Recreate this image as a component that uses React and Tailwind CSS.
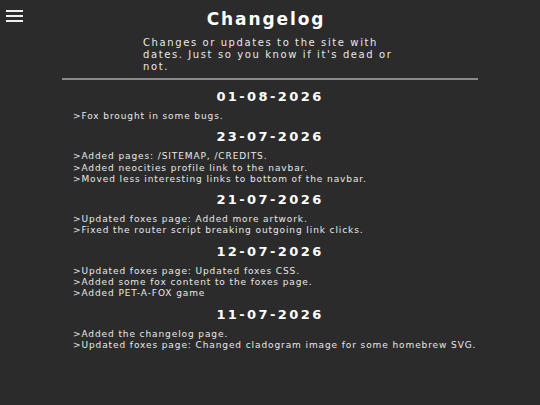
import React from "react";

const entries = [
  { date: "01-08-2026", items: [">Fox brought in some bugs."] },
  {
    date: "23-07-2026",
    items: [
      ">Added pages: /SITEMAP, /CREDITS.",
      ">Added neocities profile link to the navbar.",
      ">Moved less interesting links to bottom of the navbar.",
    ],
  },
  {
    date: "21-07-2026",
    items: [
      ">Updated foxes page: Added more artwork.",
      ">Fixed the router script breaking outgoing link clicks.",
    ],
  },
  {
    date: "12-07-2026",
    items: [
      ">Updated foxes page: Updated foxes CSS.",
      ">Added some fox content to the foxes page.",
      ">Added PET-A-FOX game",
    ],
  },
  {
    date: "11-07-2026",
    items: [
      ">Added the changelog page.",
      ">Updated foxes page: Changed cladogram image for some homebrew SVG.",
    ],
  },
];

const App = () => {
  return (
    <div className="min-h-[405px] w-full bg-[#2b2b2b] text-[#e8e8e8] font-['DejaVu_Sans',sans-serif] relative">
      {/* Menu button */}
      <button className="absolute left-[6px] top-[10px] flex flex-col gap-[3px]">
        <span className="block w-[17px] h-[2px] bg-[#f0f0f0]" />
        <span className="block w-[17px] h-[2px] bg-[#f0f0f0]" />
        <span className="block w-[17px] h-[2px] bg-[#f0f0f0]" />
      </button>

      <div className="w-[416px] ml-[62px] pt-[9px]">
        <h1 className="text-center pr-[8px] text-[17px] leading-[20px] font-bold tracking-[1.9px] text-white">
          Changelog
        </h1>
        <p className="w-[258px] ml-[81px] mt-[8px] text-[10px] leading-[12px] tracking-[1.6px]">
          Changes or updates to the site with dates. Just so you know if it's dead or not.
        </p>
        <hr className="mt-[5px] border-0 h-[2px] bg-[#8a8a8a]" />

        <div className="flex flex-col pt-[9px]">
          {entries.map((group) => (
            <div key={group.date} className="flex flex-col mb-[7px]">
              <h2 className="text-center text-[13px] leading-[16px] font-bold tracking-[2.4px] text-white">
                {group.date}
              </h2>
              <ul className="mt-[6px] pl-[11px] text-[9px] leading-[11.3px] tracking-[0.9px]">
                {group.items.map((item) => (
                  <li key={item}>{item}</li>
                ))}
              </ul>
            </div>
          ))}
        </div>
      </div>
    </div>
  );
};

export default App;
